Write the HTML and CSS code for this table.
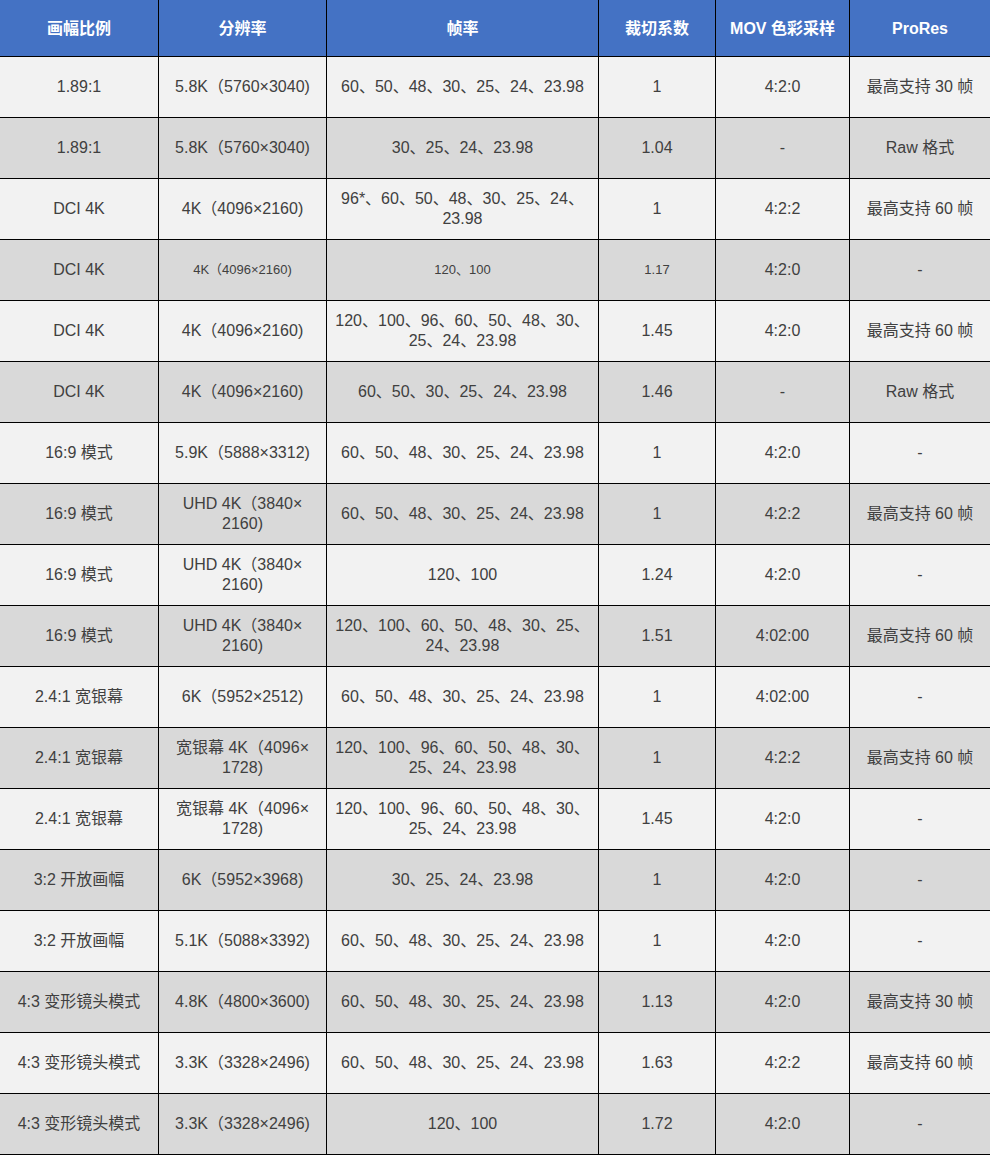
FILE: index.html
```html
<!DOCTYPE html>
<html lang="zh-CN">
<head>
<meta charset="utf-8">
<title>规格表</title>
<link rel="stylesheet" href="styles.css">
</head>
<body>
<table class="spec">
<colgroup>
<col class="c1"><col class="c2"><col class="c3"><col class="c4"><col class="c5"><col class="c6">
</colgroup>
<thead>
<tr><th>画幅比例</th><th>分辨率</th><th>帧率</th><th>裁切系数</th><th>MOV 色彩采样</th><th>ProRes</th></tr>
</thead>
<tbody>
<tr><td>1.89:1</td><td>5.8K（5760×3040)</td><td>60、50、48、30、25、24、23.98</td><td>1</td><td>4:2:0</td><td>最高支持 30 帧</td></tr>
<tr><td>1.89:1</td><td>5.8K（5760×3040)</td><td>30、25、24、23.98</td><td>1.04</td><td>-</td><td>Raw 格式</td></tr>
<tr><td>DCI 4K</td><td>4K（4096×2160)</td><td>96*、60、50、48、30、25、24、23.98</td><td>1</td><td>4:2:2</td><td>最高支持 60 帧</td></tr>
<tr><td>DCI 4K</td><td class="sm">4K（4096×2160)</td><td class="sm">120、100</td><td class="sm">1.17</td><td>4:2:0</td><td>-</td></tr>
<tr><td>DCI 4K</td><td>4K（4096×2160)</td><td>120、100、96、60、50、48、30、25、24、23.98</td><td>1.45</td><td>4:2:0</td><td>最高支持 60 帧</td></tr>
<tr><td>DCI 4K</td><td>4K（4096×2160)</td><td>60、50、30、25、24、23.98</td><td>1.46</td><td>-</td><td>Raw 格式</td></tr>
<tr><td>16:9 模式</td><td>5.9K（5888×3312)</td><td>60、50、48、30、25、24、23.98</td><td>1</td><td>4:2:0</td><td>-</td></tr>
<tr><td>16:9 模式</td><td>UHD 4K（3840×<wbr>2160)</td><td>60、50、48、30、25、24、23.98</td><td>1</td><td>4:2:2</td><td>最高支持 60 帧</td></tr>
<tr><td>16:9 模式</td><td>UHD 4K（3840×<wbr>2160)</td><td>120、100</td><td>1.24</td><td>4:2:0</td><td>-</td></tr>
<tr><td>16:9 模式</td><td>UHD 4K（3840×<wbr>2160)</td><td>120、100、60、50、48、30、25、24、23.98</td><td>1.51</td><td>4:02:00</td><td>最高支持 60 帧</td></tr>
<tr><td>2.4:1 宽银幕</td><td>6K（5952×2512)</td><td>60、50、48、30、25、24、23.98</td><td>1</td><td>4:02:00</td><td>-</td></tr>
<tr><td>2.4:1 宽银幕</td><td>宽银幕 4K（4096×<wbr>1728)</td><td>120、100、96、60、50、48、30、25、24、23.98</td><td>1</td><td>4:2:2</td><td>最高支持 60 帧</td></tr>
<tr><td>2.4:1 宽银幕</td><td>宽银幕 4K（4096×<wbr>1728)</td><td>120、100、96、60、50、48、30、25、24、23.98</td><td>1.45</td><td>4:2:0</td><td>-</td></tr>
<tr><td>3:2 开放画幅</td><td>6K（5952×3968)</td><td>30、25、24、23.98</td><td>1</td><td>4:2:0</td><td>-</td></tr>
<tr><td>3:2 开放画幅</td><td>5.1K（5088×3392)</td><td>60、50、48、30、25、24、23.98</td><td>1</td><td>4:2:0</td><td>-</td></tr>
<tr><td>4:3 变形镜头模式</td><td>4.8K（4800×3600)</td><td>60、50、48、30、25、24、23.98</td><td>1.13</td><td>4:2:0</td><td>最高支持 30 帧</td></tr>
<tr><td>4:3 变形镜头模式</td><td>3.3K（3328×2496)</td><td>60、50、48、30、25、24、23.98</td><td>1.63</td><td>4:2:2</td><td>最高支持 60 帧</td></tr>
<tr><td>4:3 变形镜头模式</td><td>3.3K（3328×2496)</td><td>120、100</td><td>1.72</td><td>4:2:0</td><td>-</td></tr>
</tbody>
</table>
</body>
</html>
```
FILE: styles.css
```css
html, body {
  margin: 0;
  padding: 0;
  background: #ffffff;
}
.spec {
  width: 990px;
  table-layout: fixed;
  border-collapse: separate;
  border-spacing: 0;
  font-family: "Liberation Sans", Arial, "Noto Sans CJK SC", sans-serif;
  font-size: 16px;
  line-height: 20px;
  color: #404040;
}
.c1 { width: 159px; }
.c2 { width: 168px; }
.c3 { width: 272px; }
.c4 { width: 117px; }
.c5 { width: 134px; }
.c6 { width: 140px; }
.spec th,
.spec td {
  box-sizing: border-box;
  border-right: 1px solid #000;
  border-bottom: 1px solid #000;
  text-align: center;
  vertical-align: middle;
  padding: 0 6px;
}
.spec th:last-child,
.spec td:last-child {
  border-right: none;
}
.spec th {
  height: 57px;
  padding-top: 2px;
  background: #4472c4;
  color: #ffffff;
  font-weight: bold;
}
.spec td {
  height: 61px;
}
.spec tbody tr:nth-child(odd) td {
  background: #f2f2f2;
}
.spec tbody tr:nth-child(even) td {
  background: #d9d9d9;
}
.spec td.sm {
  font-size: 13px;
}
```
